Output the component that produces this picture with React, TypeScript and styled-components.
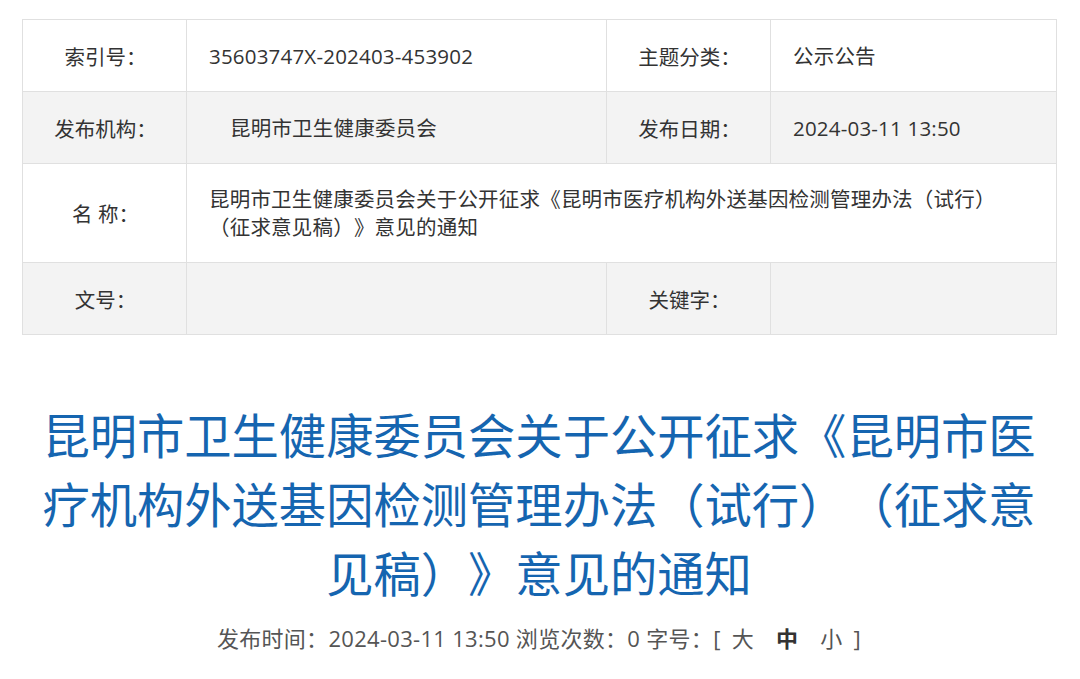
import styled, { createGlobalStyle } from "styled-components";

const GlobalStyle = createGlobalStyle`
  body {
    margin: 0;
    background: #fff;
    font-family: "Open Sans", "Noto Sans CJK SC", sans-serif;
    text-spacing-trim: space-all;
  }
`

const Page = styled.div`
  width: 1080px;
  padding: 19px 24px 0 22px;
  box-sizing: border-box;
`

const InfoTable = styled.table`
  width: 1034px;
  border-collapse: collapse;
  table-layout: fixed;
  color: #333;
  font-size: 20.5px;
`

const Row = styled.tr<{ $grey?: boolean; $h?: number }>`
  height: ${(p) => p.$h ?? 72}px;
  background: ${(p) => (p.$grey ? "#f3f3f3" : "#fff")};
`

const Label = styled.td`
  border: 1px solid #e0e0e0;
  text-align: center;
  padding: 0 0 0 2px;
  white-space: nowrap;
`

const Value = styled.td<{ $indent?: number }>`
  border: 1px solid #e0e0e0;
  padding: 0 50px 0 ${(p) => p.$indent ?? 22}px;
  line-height: 28px;
  letter-spacing: 0.2px;
`

const Title = styled.h1`
  width: 1010px;
  margin: 64px auto 0;
  color: #1565b0;
  font-family: "Noto Sans CJK SC", sans-serif;
  font-weight: 400;
  font-size: 47.3px;
  line-height: 69px;
  text-align: center;
`

const Meta = styled.div`
  margin-top: 18px;
  text-align: center;
  color: #555;
  font-size: 22px;
  line-height: 28px;
  letter-spacing: 0.3px;
`

const SizeBtn = styled.span<{ $active?: boolean }>`
  margin: 0 11px;
  font-weight: ${(p) => (p.$active ? 700 : 400)};
  color: ${(p) => (p.$active ? "#333" : "#555")};
`

export default function App() {
  return (
    <Page>
      <GlobalStyle />
      <InfoTable>
        <colgroup>
          <col style={{ width: 164 }} />
          <col style={{ width: 420 }} />
          <col style={{ width: 164 }} />
          <col style={{ width: 286 }} />
        </colgroup>
        <tbody>
          <Row>
            <Label>索引号：</Label>
            <Value>35603747X-202403-453902</Value>
            <Label>主题分类：</Label>
            <Value>公示公告</Value>
          </Row>
          <Row $grey>
            <Label>发布机构：</Label>
            <Value $indent={43}>昆明市卫生健康委员会</Value>
            <Label>发布日期：</Label>
            <Value>2024-03-11 13:50</Value>
          </Row>
          <Row $h={99}>
            <Label>名 称：</Label>
            <Value colSpan={3}>
              昆明市卫生健康委员会关于公开征求《昆明市医疗机构外送基因检测管理办法（试行）（征求意见稿）》意见的通知
            </Value>
          </Row>
          <Row $grey>
            <Label>文号：</Label>
            <Value></Value>
            <Label>关键字：</Label>
            <Value></Value>
          </Row>
        </tbody>
      </InfoTable>
      <Title>
        昆明市卫生健康委员会关于公开征求《昆明市医疗机构外送基因检测管理办法（试行）（征求意见稿）》意见的通知
      </Title>
      <Meta>
        发布时间：2024-03-11 13:50 浏览次数：0 字号：[
        <SizeBtn>大</SizeBtn>
        <SizeBtn $active>中</SizeBtn>
        <SizeBtn>小</SizeBtn>]
      </Meta>
    </Page>
  );
}
